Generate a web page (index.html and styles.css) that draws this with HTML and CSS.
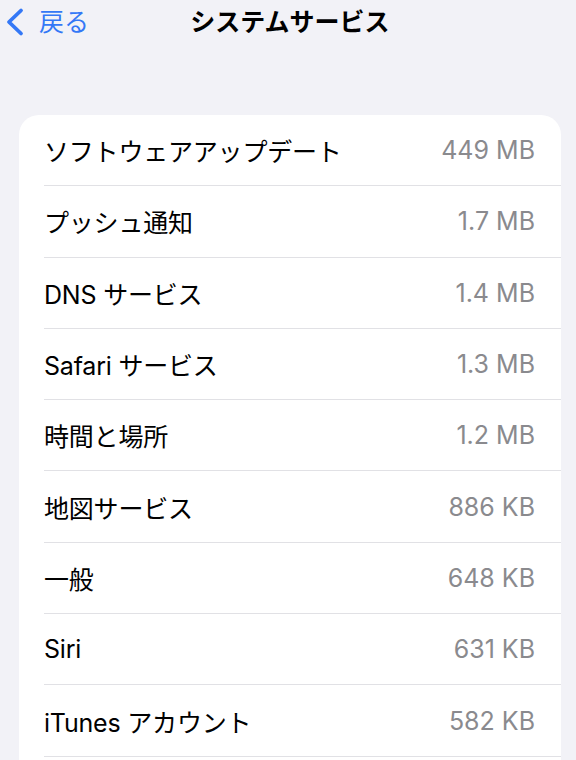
FILE: index.html
```html
<!DOCTYPE html>
<html lang="ja">
<head>
<meta charset="utf-8">
<link rel="stylesheet" href="styles.css">
</head>
<body>
<header class="nav">
  <a class="back">
    <svg class="chev" width="20" height="30" viewBox="0 0 20 30"><path d="M16 3.5 L4 15 L16 26.5" fill="none" stroke="#3478f6" stroke-width="3.8" stroke-linecap="round" stroke-linejoin="round"/></svg>
    <span>戻る</span>
  </a>
  <h1 class="title">システムサービス</h1>
</header>
<main class="card">
  <div class="row"><span class="label">ソフトウェアアップデート</span><span class="value">449 MB</span></div>
  <div class="row"><span class="label">プッシュ通知</span><span class="value">1.7 MB</span></div>
  <div class="row"><span class="label">DNS サービス</span><span class="value">1.4 MB</span></div>
  <div class="row"><span class="label">Safari サービス</span><span class="value">1.3 MB</span></div>
  <div class="row"><span class="label">時間と場所</span><span class="value">1.2 MB</span></div>
  <div class="row"><span class="label">地図サービス</span><span class="value">886 KB</span></div>
  <div class="row"><span class="label">一般</span><span class="value">648 KB</span></div>
  <div class="row"><span class="label">Siri</span><span class="value">631 KB</span></div>
  <div class="row"><span class="label">iTunes アカウント</span><span class="value">582 KB</span></div>
  <div class="row"><span class="label">&nbsp;</span><span class="value"></span></div>
</main>
</body>
</html>
```
FILE: styles.css
```css
* { box-sizing: border-box; }
html, body { margin: 0; padding: 0; }
body {
  background: #f2f2f7;
  font-family: Inter, "Noto Sans CJK JP", sans-serif;
  height: 760px;
  overflow: hidden;
}
.nav {
  position: relative;
  height: 46px;
  display: flex;
  align-items: center;
  justify-content: center;
}
.back {
  position: absolute;
  left: 5px;
  top: 7px;
  display: flex;
  align-items: center;
  gap: 14px;
  color: #3478f6;
  font-size: 25px;
  line-height: 30px;
}
.chev { display: block; }
.title {
  margin: 0 0 0 4px;
  font-size: 25px;
  font-weight: 700;
  color: #000;
  line-height: 30px;
  padding-bottom: 2px;
}
.card {
  margin: 69px 15px 0 19px;
  background: #fff;
  border-radius: 20px;
  padding-left: 25px;
}
.row {
  height: 71.3px;
  display: flex;
  align-items: center;
  justify-content: space-between;
  padding-right: 26px;
  border-bottom: 1px solid #e1e1e5;
  font-size: 25px;
  color: #000;
}
.label { letter-spacing: -0.2px; }
.value { color: #8a8a8e; }
```
